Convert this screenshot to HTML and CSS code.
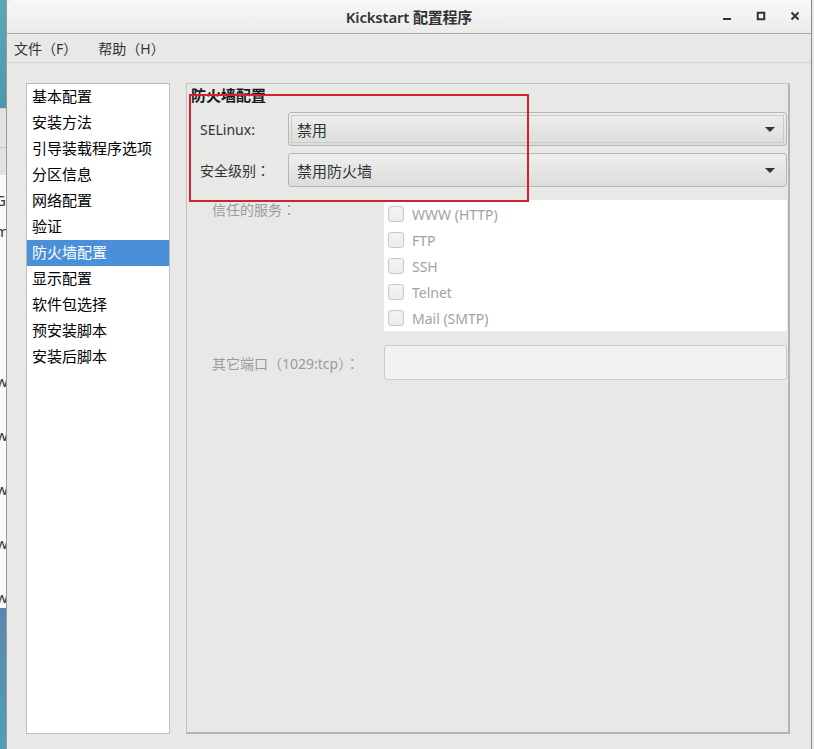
FILE: index.html
```html
<!DOCTYPE html>
<html lang="zh-CN">
<head>
<meta charset="utf-8">
<title>Kickstart 配置程序</title>
<link rel="stylesheet" href="styles.css">
</head>
<body>
<div class="desk">
  <div class="desk-top"></div>
  <div class="desk-gray"><div class="desk-gray-bar"></div></div>
  <div class="desk-doc">
    <span class="frag f-g">G</span>
    <span class="frag f-m">m</span>
    <span class="frag f-w1">w</span>
    <span class="frag f-w">w</span>
    <span class="frag f-w">w</span>
    <span class="frag f-w">w</span>
    <span class="frag f-w">w</span>
  </div>
  <div class="desk-bottom"></div>
</div>
<div class="window">
  <div class="titlebar">
    <div class="tb-spacer"></div>
    <div class="tb-title">Kickstart 配置程序</div>
    <div class="tb-controls">
      <svg width="10" height="10" viewBox="0 0 10 10"><rect x="1" y="7" width="8" height="2" fill="#2e3436"/></svg>
      <svg width="10" height="10" viewBox="0 0 10 10"><rect x="1.75" y="1.75" width="6.5" height="6.5" fill="none" stroke="#2e3436" stroke-width="2"/></svg>
      <svg width="10" height="10" viewBox="0 0 10 10"><path d="M1.5 1.5 L8.5 8.5 M8.5 1.5 L1.5 8.5" stroke="#2e3436" stroke-width="2"/></svg>
    </div>
  </div>
  <div class="menubar">
    <span class="menu-item">文件（F）</span>
    <span class="menu-item">帮助（H）</span>
  </div>
  <div class="main">
    <ul class="nav">
      <li>基本配置</li>
      <li>安装方法</li>
      <li>引导装载程序选项</li>
      <li>分区信息</li>
      <li>网络配置</li>
      <li>验证</li>
      <li class="selected">防火墙配置</li>
      <li>显示配置</li>
      <li>软件包选择</li>
      <li>预安装脚本</li>
      <li>安装后脚本</li>
    </ul>
    <div class="frame">
      <div class="frame-title">防火墙配置</div>
      <div class="combo-row">
        <span class="field-label">SELinux:</span>
        <div class="combo focused"><span>禁用</span><span class="arrow"></span></div>
      </div>
      <div class="combo-row">
        <span class="field-label">安全级别<span class="colon" lang="zh-TW">：</span></span>
        <div class="combo"><span>禁用防火墙</span><span class="arrow"></span></div>
      </div>
      <div class="services-row">
        <span class="dim-label services-label">信任的服务<span class="colon" lang="zh-TW">：</span></span>
        <div class="services">
          <label class="check"><span class="box"></span>WWW (HTTP)</label>
          <label class="check"><span class="box"></span>FTP</label>
          <label class="check"><span class="box"></span>SSH</label>
          <label class="check"><span class="box"></span>Telnet</label>
          <label class="check"><span class="box"></span>Mail (SMTP)</label>
        </div>
      </div>
      <div class="port-row">
        <span class="dim-label port-label">其它端口（1029:tcp）<span class="colon" lang="zh-TW">：</span></span>
        <div class="entry"></div>
      </div>
      <div class="annotation"></div>
    </div>
  </div>
</div>
</body>
</html>
```
FILE: styles.css
```css
* { box-sizing: border-box; }
html, body { margin: 0; padding: 0; }
body {
  width: 814px;
  height: 749px;
  overflow: hidden;
  display: flex;
  background: #e8e8e7;
  font-family: "Noto Sans", "Noto Sans CJK SC", sans-serif;
  color: #2e3436;
}

/* background desktop strip */
.desk {
  width: 6px;
  flex: none;
  display: flex;
  flex-direction: column;
  overflow: hidden;
}
.desk-top {
  height: 108px;
  background: linear-gradient(180deg, #5ba6b6, #4e98ae);
}
.desk-gray {
  height: 67px;
  background: #e2e2e1;
  border-top: 1px solid #cfcfcf;
  padding-top: 38px;
}
.desk-gray-bar { height: 1px; background: #c8c8c8; }
.desk-doc {
  height: 433px;
  background: #fafafa;
  display: flex;
  flex-direction: column;
  font-family: "Noto Sans", sans-serif;
  font-size: 15px;
  line-height: 18px;
  color: #333;
  padding-top: 16px;
}
.frag { display: block; margin-left: -5px; height: 18px; }
.f-m { margin-top: 13px; }
.f-w1 { margin-top: 132px; margin-left: -4px; }
.f-w { margin-top: 36px; margin-left: -4px; }
.desk-bottom {
  flex: 1;
  background: linear-gradient(180deg, #5b86b0, #4f9fb4);
}

/* window */
.window {
  flex: 1;
  display: flex;
  flex-direction: column;
  border-left: 1px solid #9a9a9a;
  border-right: 1px solid #8a8a8a;
  margin-right: 2px;
  background: #e8e8e7;
}
.titlebar {
  height: 34px;
  flex: none;
  display: grid;
  grid-template-columns: 1fr auto 1fr;
  align-items: center;
  background: linear-gradient(180deg, #f7f7f7, #ececeb);
  border-bottom: 1px solid #a8a8a6;
  border-top-left-radius: 5px;
}
.tb-title {
  font-size: 15px;
  font-weight: 600;
  color: #2e3436;
  letter-spacing: -0.2px;
}
.tb-controls {
  justify-self: end;
  display: flex;
  gap: 24px;
  padding-right: 11px;
  padding-bottom: 1px;
}
.tb-controls svg { display: block; }

.menubar {
  height: 29px;
  flex: none;
  display: flex;
  align-items: center;
  gap: 21px;
  padding-left: 7px;
  border-bottom: 1px solid #d3d3d2;
  font-size: 14px;
  color: #2e3436;
}

.main {
  flex: 1;
  display: flex;
  gap: 16px;
  padding: 20px 21px 15px 19px;
}

.nav {
  list-style: none;
  margin: 0;
  padding: 0;
  width: 144px;
  flex: none;
  background: #fff;
  border: 1px solid #bdbdbb;
  font-family: "Noto Sans CJK SC", sans-serif;
  font-size: 15px;
  color: #000;
}
.nav li {
  height: 26px;
  line-height: 24px;
  padding-left: 5px;
  white-space: nowrap;
}
.nav li.selected {
  background: #4a90d9;
  color: #fff;
}

.frame {
  flex: 1;
  position: relative;
  border-top: 1px solid #c4c4c2;
  border-left: 1px solid #c4c4c2;
  border-right: 2px solid #b3b3b1;
  border-bottom: 2px solid #b3b3b1;
  padding: 0 1px 0 13px;
  display: flex;
  flex-direction: column;
}
.frame-title {
  font-family: "Noto Sans CJK SC", sans-serif;
  font-weight: 700;
  font-size: 15px;
  line-height: 18px;
  margin: 2px 0 0 -9px;
  color: #1a1a1a;
}

.colon { font-family: "Noto Sans CJK TC", sans-serif; }

.combo-row {
  display: flex;
  align-items: center;
  margin-top: 8px;
}
.combo-row + .combo-row { margin-top: 7px; }
.field-label {
  width: 88px;
  flex: none;
  font-size: 14px;
  color: #2e3436;
  white-space: nowrap;
}
.combo {
  flex: 1;
  height: 34px;
  display: flex;
  align-items: center;
  justify-content: space-between;
  padding: 0 11px 0 8px;
  border: 1px solid #b6b6b3;
  border-radius: 3px;
  background: linear-gradient(180deg, #eeeeed, #dddddc);
  font-family: "Noto Sans CJK SC", sans-serif;
  font-size: 15px;
  color: #2e3436;
}
.combo.focused {
  outline: 1px solid #cacac8;
  outline-offset: -4px;
}
.arrow {
  width: 0;
  height: 0;
  border-left: 5px solid transparent;
  border-right: 5px solid transparent;
  border-top: 5px solid #2e3436;
}

.dim-label {
  font-size: 14px;
  color: #9b9b9b;
  white-space: nowrap;
}
.services-row {
  display: flex;
  margin-top: 13px;
}
.services-label {
  width: 184px;
  flex: none;
  padding-left: 12px;
  line-height: 18px;
}
.services {
  flex: 1;
  height: 131px;
  background: #fff;
  display: flex;
  flex-direction: column;
  padding-top: 1px;
}
.check {
  height: 26px;
  display: flex;
  align-items: center;
  gap: 8px;
  padding-left: 4px;
  font-size: 14px;
  color: #a2a2a2;
}
.box {
  width: 16px;
  height: 16px;
  border: 1px solid #c7c7c5;
  border-radius: 3px;
  background: linear-gradient(180deg, #f4f4f3, #ececeb);
}

.port-row {
  display: flex;
  align-items: center;
  margin-top: 14px;
}
.port-label {
  width: 184px;
  flex: none;
  padding-left: 12px;
}
.entry {
  flex: 1;
  height: 35px;
  background: #f2f2f1;
  border: 1px solid #c9c9c7;
  border-radius: 3px;
}

.annotation {
  position: absolute;
  left: 2px;
  top: 10px;
  width: 340px;
  height: 108px;
  border: 2px solid #d2222e;
  pointer-events: none;
}
```
